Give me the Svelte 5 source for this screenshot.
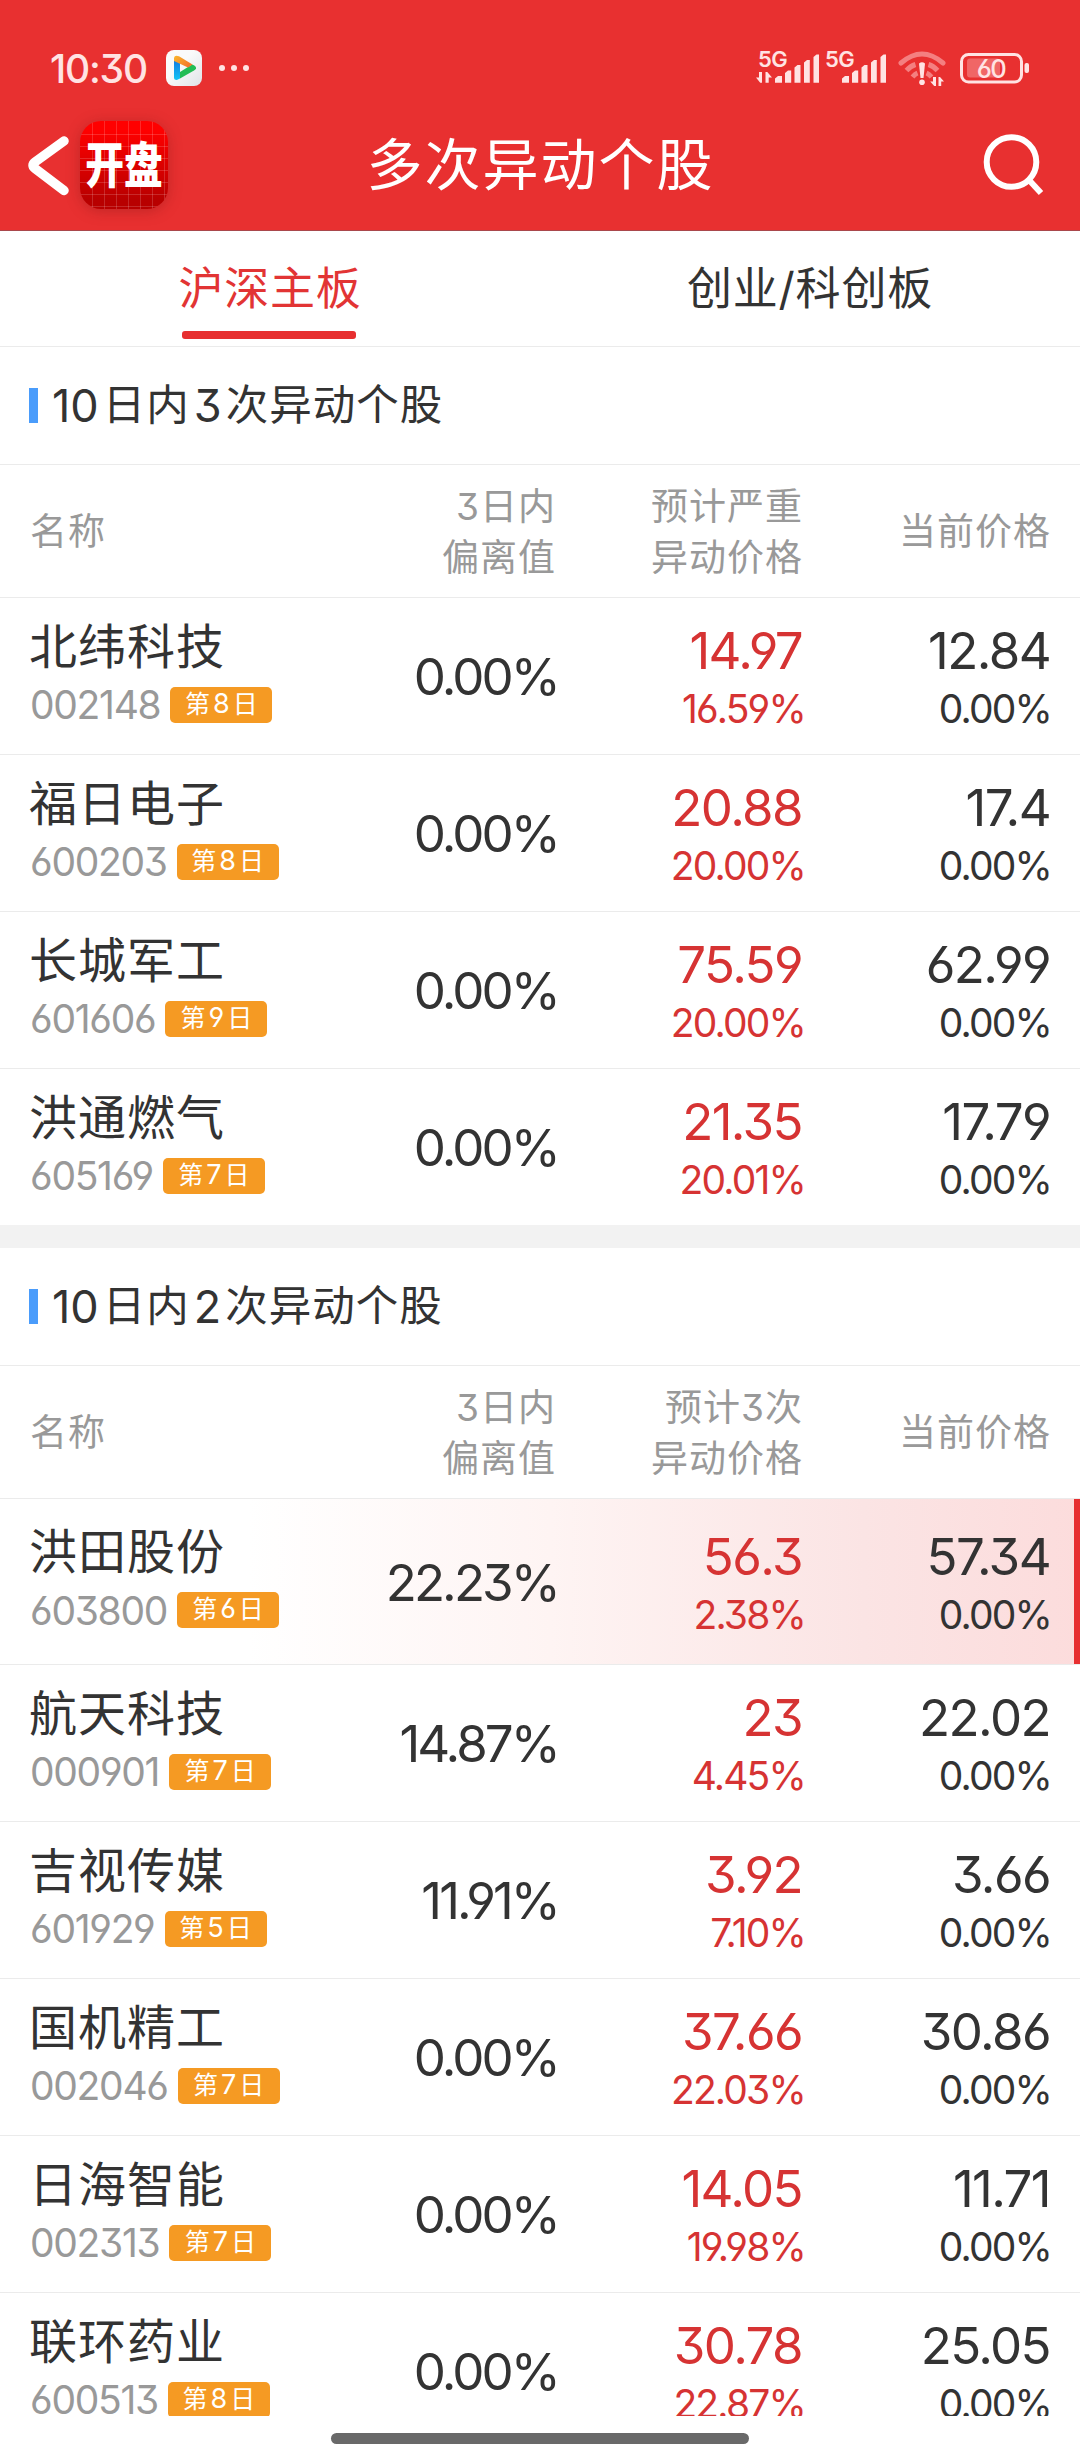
<script>
    const tabs = ['沪深主板', '创业/科创板'];
    let activeTab = 0;

    const sections = [
        {
            title: ['10', '日内', '3', '次异动个股'],
            priceHead: ['预计严重', '异动价格'],
            rows: [
                { name: '北纬科技', code: '002148', day: 8, dev: '0.00%', target: '14.97', gap: '16.59%', price: '12.84', pct: '0.00%' },
                { name: '福日电子', code: '600203', day: 8, dev: '0.00%', target: '20.88', gap: '20.00%', price: '17.4', pct: '0.00%' },
                { name: '长城军工', code: '601606', day: 9, dev: '0.00%', target: '75.59', gap: '20.00%', price: '62.99', pct: '0.00%' },
                { name: '洪通燃气', code: '605169', day: 7, dev: '0.00%', target: '21.35', gap: '20.01%', price: '17.79', pct: '0.00%' }
            ]
        },
        {
            title: ['10', '日内', '2', '次异动个股'],
            priceHead: ['预计3次', '异动价格'],
            rows: [
                { name: '洪田股份', code: '603800', day: 6, dev: '22.23%', target: '56.3', gap: '2.38%', price: '57.34', pct: '0.00%', hit: true },
                { name: '航天科技', code: '000901', day: 7, dev: '14.87%', target: '23', gap: '4.45%', price: '22.02', pct: '0.00%' },
                { name: '吉视传媒', code: '601929', day: 5, dev: '11.91%', target: '3.92', gap: '7.10%', price: '3.66', pct: '0.00%' },
                { name: '国机精工', code: '002046', day: 7, dev: '0.00%', target: '37.66', gap: '22.03%', price: '30.86', pct: '0.00%' },
                { name: '日海智能', code: '002313', day: 7, dev: '0.00%', target: '14.05', gap: '19.98%', price: '11.71', pct: '0.00%' },
                { name: '联环药业', code: '600513', day: 8, dev: '0.00%', target: '30.78', gap: '22.87%', price: '25.05', pct: '0.00%' }
            ]
        }
    ];

    // left edge of each signal group in the status bar
    const signals = [0, 67];
</script>

<main class="screen">
    <header>
        <div class="status">
            <span class="time">10:30</span>
            <svg class="video" width="36" height="36" viewBox="0 0 36 36">
                <defs>
                    <linearGradient id="tile" x1="0" y1="0" x2="1" y2="1">
                        <stop offset="0.4" stop-color="#fafafa" />
                        <stop offset="1" stop-color="#dfe3e8" />
                    </linearGradient>
                    <linearGradient id="blue" x1="0" y1="0" x2="0" y2="1">
                        <stop offset="0" stop-color="#1277e0" />
                        <stop offset="1" stop-color="#12c4f5" />
                    </linearGradient>
                    <linearGradient id="orange" x1="0" y1="0" x2="1" y2="0.6">
                        <stop offset="0" stop-color="#fbb62c" />
                        <stop offset="1" stop-color="#f4762a" />
                    </linearGradient>
                </defs>
                <rect width="36" height="36" rx="8" fill="url(#tile)" />
                <path d="M8 9v18.500q0 2.500 2.800 2.500l3.200-1.500V13z" fill="url(#blue)" />
                <path d="M14 22l12-7.500q4.500 1.500 4 4-.3 1-2 2L14 28.500z" fill="#22bd55" />
                <path d="M8 11V8q.5-3.500 5-1.800l13.500 8.300-4.500 3z" fill="url(#orange)" />
            </svg>
            <span class="dots"><i></i><i></i><i></i></span>
            <svg class="indicators" width="284" height="44" viewBox="750 46 284 44">
                {#each signals as dx}
                    <g transform="translate({dx} 0)" fill="#ffe3e3">
                        <text x="758" y="66.500" font-size="22" font-weight="600" letter-spacing="-0.500">5G</text>
                        <path d="M775 82.700v-4.200l3-2.500h4v6.700z" />
                        <path d="M785 82.700V73l3-2.500h3.200v12.200z" />
                        <path d="M794.500 82.700V67.500l3-2.500h3v17.700z" />
                        <path d="M804 82.700V62.500l3-2.500h2.800v22.700z" />
                        <path d="M813.500 82.700V57l3-2.500h2.500v28.200z" />
                    </g>
                {/each}
                <path d="M762 72v10.700h-1.800L756 77.500h3V72zM765.500 82.700V72h1.800l4.700 5.500h-3.300v5.200z" fill="#ffe3e3" />
                <g fill="none" stroke="#f47f80" stroke-width="5">
                    <path d="M901 63q21-18 42 0" stroke-linecap="round" />
                    <path d="M906.500 70.500q4-4.500 9-6M937.500 70.500q-4-4.500-9-6" />
                    <path d="M912.500 77q2.500-3 5-4M931.500 77q-2.500-3-5-4" />
                </g>
                <path d="M919 63.500q3-2.500 6 0L923.500 78h-3z" fill="#ffe3e3" />
                <circle cx="922" cy="82.300" r="2.800" fill="#ffe3e3" />
                <path d="M936 77v9h-1.800l-4-4.500h2.800V77zM938.500 86v-9h1.500l4 4.500h-2.800V86z" fill="#ffe3e3" />
                <rect x="961.500" y="54.500" width="60" height="27.500" rx="7" fill="none" stroke="#ffe3e3" stroke-width="3" />
                <rect x="967" y="58.500" width="33" height="19" rx="3" fill="#f06666" />
                <rect x="1024.500" y="63" width="4.500" height="10" rx="2" fill="#ffe3e3" />
                <text x="991" y="77.500" font-size="25.500" font-weight="500" text-anchor="middle" letter-spacing="-1.500" fill="#ffe3e3">60</text>
            </svg>
        </div>
        <div class="nav">
            <svg class="back" width="44" height="64" viewBox="0 0 44 64">
                <path d="M38 8L9 29q-4 3 0 6.500L38 57.500" fill="none" stroke="#fff" stroke-width="9.500" stroke-linecap="round" stroke-linejoin="round" />
            </svg>
            <div class="logo"><span>开盘</span></div>
            <h1>多次异动个股</h1>
            <svg class="search" width="62" height="64" viewBox="0 0 62 64">
                <circle cx="28.500" cy="29" r="24.800" fill="none" stroke="#fff" stroke-width="6" />
                <path d="M46 47L58 60" stroke="#fff" stroke-width="6" />
            </svg>
        </div>
    </header>

    <nav class="tabs">
        {#each tabs as tab, i}
            <button class:active={i === activeTab} on:click={() => (activeTab = i)}>{tab}</button>
        {/each}
    </nav>

    <div class="list">
        {#each sections as section}
            <section>
                <h2>
                    <span class="num">{section.title[0]}</span>
                    <span>{section.title[1]}</span>
                    <span class="num">{section.title[2]}</span>
                    <span>{section.title[3]}</span>
                </h2>
                <div class="grid thead">
                    <span>名称</span>
                    <span class="right">3日内<br />偏离值</span>
                    <span class="right">{section.priceHead[0]}<br />{section.priceHead[1]}</span>
                    <span class="right">当前价格</span>
                </div>
                {#each section.rows as row}
                    <div class="grid row" class:hit={row.hit}>
                        <div class="stock">
                            <div class="name">{row.name}</div>
                            <div class="meta">
                                <span class="code">{row.code}</span>
                                <span class="tag">第<b>{row.day}</b>日</span>
                            </div>
                        </div>
                        <div class="right big dev">{row.dev}</div>
                        <div class="right quote red">
                            <div class="big">{row.target}</div>
                            <div class="small">{row.gap}</div>
                        </div>
                        <div class="right quote">
                            <div class="big">{row.price}</div>
                            <div class="small">{row.pct}</div>
                        </div>
                    </div>
                {/each}
            </section>
        {/each}
    </div>

    <footer><div class="home-bar"></div></footer>
</main>

<style>
    :global(body) {
        margin: 0;
        background: #fff;
    }

    .screen {
        width: 1080px;
        height: 2460px;
        overflow: hidden;
        display: flex;
        flex-direction: column;
        font-family: Inter, "Noto Sans CJK SC", sans-serif;
        font-feature-settings: "cv03", "cv04", "cv09";
        color: #333;
        background: #fff;
    }

    header {
        height: 230px;
        flex: none;
        background: #e83030;
        border-bottom: 1px solid #a9484c;
        color: #fff;
    }

    .status {
        height: 74px;
        padding: 31px 46px 0 50px;
        display: flex;
        align-items: center;
    }

    .time {
        width: 116px;
        font-size: 39px;
        font-weight: 500;
        letter-spacing: -1.2px;
        color: #ffe3e3;
    }

    .dots {
        display: flex;
        gap: 6px;
        margin-left: 17px;
    }

    .dots i {
        width: 6px;
        height: 6px;
        border-radius: 50%;
        background: #ffe3e3;
    }

    .indicators {
        margin-left: auto;
    }

    .nav {
        height: 120px;
        padding: 0 35px 0 26px;
        display: flex;
        align-items: center;
    }

    .logo {
        width: 88px;
        height: 88px;
        margin-left: 10px;
        border-radius: 21px;
        display: flex;
        align-items: center;
        justify-content: center;
        background:
            repeating-linear-gradient(90deg, transparent 0 11px, rgba(255, 255, 255, 0.16) 11px 12px) 1px 0,
            repeating-linear-gradient(transparent 0 11px, rgba(255, 255, 255, 0.16) 11px 12px) 0 2px,
            linear-gradient(#ff0000 10%, #b80000 90%);
        box-shadow: 0 2px 14px rgba(120, 20, 20, 0.35);
    }

    .logo span {
        font-size: 49px;
        font-weight: 900;
        line-height: 1;
        transform: scaleX(0.79);
        white-space: nowrap;
    }

    h1 {
        flex: 1;
        margin: 0 70px 10px 0;
        text-align: center;
        font-size: 56px;
        font-weight: 400;
        letter-spacing: 2px;
    }

    .tabs {
        flex: none;
        height: 115px;
        display: flex;
        border-bottom: 1px solid #ebebeb;
    }

    .tabs button {
        flex: 1;
        position: relative;
        padding: 0 0 6px;
        border: none;
        background: none;
        font: inherit;
        font-size: 45px;
        letter-spacing: 0.8px;
        color: #333;
    }

    .tabs button.active {
        color: #e23434;
    }

    .tabs button.active::after {
        content: "";
        position: absolute;
        left: 182px;
        bottom: 7px;
        width: 174px;
        height: 8px;
        border-radius: 3px;
        background: #e72f30;
    }

    .list {
        flex: none;
        height: 2069px;
        overflow: hidden;
    }

    section + section {
        border-top: 23px solid #f2f2f2;
    }

    h2 {
        height: 117px;
        margin: 0;
        padding: 0 29px;
        display: flex;
        align-items: center;
        gap: 4px;
        border-bottom: 1px solid #ebebeb;
        font-size: 42.5px;
        font-weight: 400;
        line-height: 60px;
        letter-spacing: 1px;
    }

    h2::before {
        content: "";
        width: 9px;
        height: 35px;
        margin-right: 10px;
        background: #4a9cfb;
    }

    h2 span {
        padding-bottom: 2px;
    }

    h2 .num {
        padding-bottom: 0;
        font-size: 45px;
        letter-spacing: 0;
    }

    .grid {
        display: grid;
        grid-template-columns: 300px 225px 247px 248px;
        align-items: center;
        padding: 0 30px;
        border-bottom: 1px solid #ebebeb;
    }

    .right {
        text-align: right;
    }

    .thead {
        height: 132px;
        font-size: 37px;
        line-height: 51px;
        letter-spacing: 1px;
        color: #999;
    }

    .thead .right {
        margin-right: -1px;
        padding-top: 1px;
    }

    .row {
        height: 156px;
    }

    .row:last-child {
        border-bottom: none;
    }

    .row.hit {
        height: 165px;
        background: linear-gradient(90deg, #fff 23%, #fef4f3 51%, #fbe4e4 80%, #fcdcdc);
        box-shadow: inset -6px 0 #e72f30;
    }

    .stock {
        padding-bottom: 3px;
    }

    .name {
        margin-left: -1px;
        font-size: 48px;
        line-height: 60px;
        letter-spacing: 1px;
    }

    .meta {
        height: 56px;
        display: flex;
        align-items: center;
        gap: 10px;
    }

    .code {
        font-size: 39px;
        letter-spacing: -1.3px;
        color: #999;
    }

    .tag {
        width: 102px;
        height: 36px;
        border-radius: 5px;
        background: #f59a23;
        color: #fff;
        font-size: 25px;
        line-height: 34px;
        text-align: center;
    }

    .tag b {
        margin: 0 3px;
        font-size: 27px;
        font-weight: 400;
    }

    .big {
        font-size: 51px;
        line-height: 60px;
        letter-spacing: -1.6px;
    }

    .dev {
        margin-right: -3px;
        padding-top: 2px;
        letter-spacing: -2.9px;
    }

    .quote {
        padding-top: 6px;
    }

    .small {
        margin-right: -1px;
        font-size: 39px;
        line-height: 56px;
        letter-spacing: -1.8px;
    }

    .red {
        color: #d63333;
    }

    .red .small {
        margin-right: -3px;
    }

    footer {
        height: 44px;
        display: flex;
        justify-content: center;
        align-items: center;
    }

    .home-bar {
        width: 418px;
        height: 11px;
        border-radius: 6px;
        background: #696969;
    }
</style>
